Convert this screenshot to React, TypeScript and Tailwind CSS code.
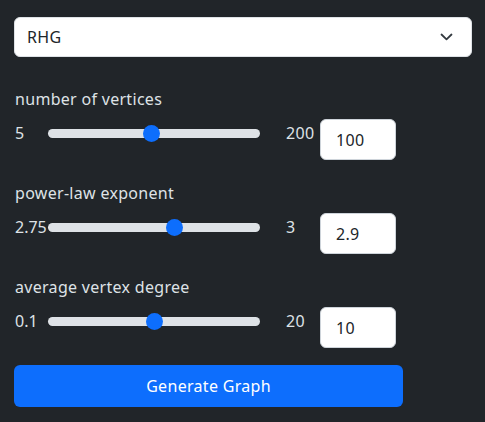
const font = { fontFamily: '"Noto Sans", "Open Sans", sans-serif' };

type Row = { label: string; min: number; max: number; value: number; minText: string; maxText: string; shown: string };

const rows: Row[] = [
  { label: "number of vertices", min: 5, max: 200, value: 100, minText: "5", maxText: "200", shown: "100" },
  { label: "power-law exponent", min: 2.75, max: 3, value: 2.9, minText: "2.75", maxText: "3", shown: "2.9" },
  { label: "average vertex degree", min: 0.1, max: 20, value: 10, minText: "0.1", maxText: "20", shown: "10" },
];

function Slider({ row }: { row: Row }) {
  const frac = (row.value - row.min) / (row.max - row.min);
  // thumb 16px, so its left edge runs 0..196 on a 212px track
  const left = frac * 196;
  return (
    <div className="relative w-[212px] h-[24px] flex items-center">
      <div className="w-full h-[9px] rounded-full bg-[#dee2e6]" />
      <div
        className="absolute top-[3.5px] w-[17px] h-[17px] rounded-full bg-[#0d6efd]"
        style={{ left: `${left}px` }}
      />
    </div>
  );
}

export default function App() {
  return (
    <div className="min-h-[422px] w-[485px] bg-[#212529] pl-[14px] pr-[13px] pt-[17px] text-[#dee2e6] tracking-[0.3px]" style={font}>
      {/* Graph type */}
      <div className="h-[40px] w-[458px] rounded-[6px] bg-white flex items-center justify-between pl-[12px] pr-[18px] border border-[#dee2e6]">
        <span className="text-[16px] text-[#212529]">RHG</span>
        <svg width="13" height="8" viewBox="0 0 13 8" fill="none">
          <path d="M1.5 1.5 L6.5 6.3 L11.5 1.5" stroke="#343a40" strokeWidth="1.8" strokeLinecap="round" strokeLinejoin="round" />
        </svg>
      </div>

      <div className="mt-[30px]">
        {rows.map((row) => (
          <div key={row.label} className="mb-[21px]">
            <div className="text-[16px] leading-[24px] pl-[1px]">{row.label}</div>
            <div className="mt-[8px] flex items-start">
              <div className="mt-[2px] flex items-center h-[24px]">
                <span className="w-[34px] pl-[1px] text-[16px] leading-[24px] whitespace-nowrap tracking-normal">{row.minText}</span>
                <Slider row={row} />
                <span className="w-[60px] pl-[26px] text-[16px] leading-[24px]">{row.maxText}</span>
              </div>
              <div className="h-[41px] w-[76px] rounded-[6px] bg-white border border-[#ced4da] flex items-center pl-[15px] text-[16px] text-[#212529]">
                {row.shown}
              </div>
            </div>
          </div>
        ))}
      </div>

      <button className="-mt-[4px] h-[42px] w-[389px] rounded-[6px] bg-[#0d6efd] text-white text-[16px] tracking-[0.3px] flex items-center justify-center" style={font}>
        Generate Graph
      </button>
    </div>
  );
}
